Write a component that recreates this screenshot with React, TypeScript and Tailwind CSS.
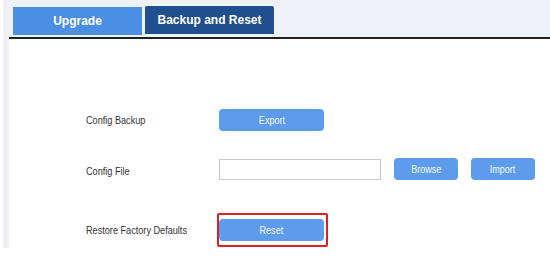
const font = { fontFamily: '"Liberation Sans", Arial, sans-serif' };

function Btn({ label, className }: { label: string; className: string }) {
  return (
    <button
      className={`flex h-[22px] items-center justify-center rounded-[4px] bg-[#5d9cec] text-[11px] text-[#f4f8ff] ${className}`}
    >
      <span className="inline-block scale-x-[0.82]">{label}</span>
    </button>
  );
}

function Label({ text, className = "" }: { text: string; className?: string }) {
  return (
    <span className={`w-[133px] ${className}`}>
      <span className="inline-block origin-left scale-x-[0.83] whitespace-nowrap">{text}</span>
    </span>
  );
}

export default function App() {
  return (
    <div className="flex h-[273px] w-[550px] overflow-hidden bg-white text-[#333]" style={font}>
      <div className="ml-[3px] h-[248px] w-[6px] bg-[#eef0f5]" />
      <div className="flex flex-1 flex-col">
        <div className="flex h-[39px] items-end gap-[3px] border-b-2 border-[#222] bg-[#eef1f5] pb-[2px] pl-[4px]">
          <div className="flex h-[28px] w-[129px] items-center justify-center bg-[#4a8fe3] text-[12px] font-bold text-white">
            Upgrade
          </div>
          <div className="mb-[1px] flex h-[28px] w-[129px] items-center justify-center rounded-t-[2px] bg-[#1f4f8f] text-[12px] font-bold text-white">
            Backup and Reset
          </div>
        </div>

        <div className="flex flex-col pl-[77px] text-[11px]">
          <div className="mt-[70px] flex h-[22px] items-center">
            <Label text="Config Backup" />
            <Btn label="Export" className="w-[105px]" />
          </div>

          <div className="mt-[27px] flex h-[22px] items-center">
            <Label text="Config File" className="pt-[5px]" />
            <div className="h-[21px] w-[162px] border border-[#c8c8c8] bg-white" />
            <Btn label="Browse" className="ml-[13px] w-[64px]" />
            <Btn label="Import" className="ml-[13px] w-[64px]" />
          </div>

          <div className="mt-[39px] flex h-[22px] items-center">
            <Label text="Restore Factory Defaults" />
            <div className="relative">
              <Btn label="Reset" className="w-[105px]" />
              <span className="absolute -top-[6px] -bottom-[6px] -left-[2px] -right-[4px] rounded-[2px] border-2 border-[#e02020]" />
            </div>
          </div>
        </div>
      </div>
    </div>
  );
}
